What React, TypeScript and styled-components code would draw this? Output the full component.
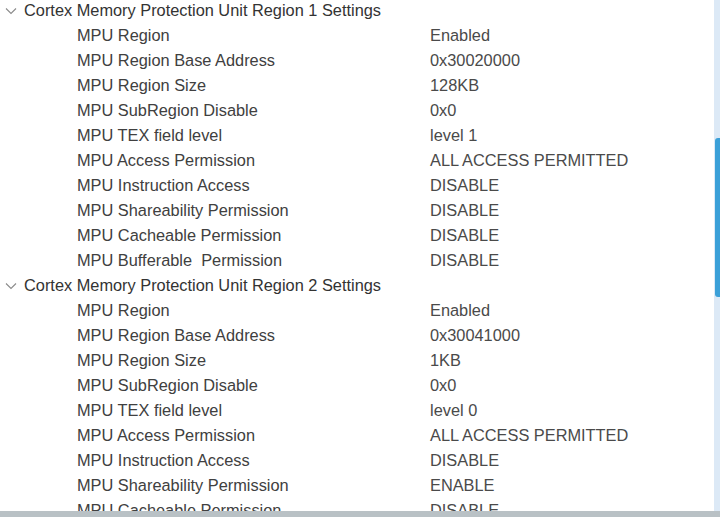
import React from "react";
import styled, { createGlobalStyle } from "styled-components";

const GlobalStyle = createGlobalStyle`
    html, body {
        margin:0;
        padding:0;
        background:#ffffff;
    }
    body {
        font-family:"Liberation Sans", Arial, sans-serif;
    }
`;

type Param = [string, string];

const groups: { title: string; params: Param[] }[] = [
    {
        title: "Cortex Memory Protection Unit Region 1 Settings",
        params: [
            ["MPU Region", "Enabled"],
            ["MPU Region Base Address", "0x30020000"],
            ["MPU Region Size", "128KB"],
            ["MPU SubRegion Disable", "0x0"],
            ["MPU TEX field level", "level 1"],
            ["MPU Access Permission", "ALL ACCESS PERMITTED"],
            ["MPU Instruction Access", "DISABLE"],
            ["MPU Shareability Permission", "DISABLE"],
            ["MPU Cacheable Permission", "DISABLE"],
            ["MPU Bufferable  Permission", "DISABLE"],
        ],
    },
    {
        title: "Cortex Memory Protection Unit Region 2 Settings",
        params: [
            ["MPU Region", "Enabled"],
            ["MPU Region Base Address", "0x30041000"],
            ["MPU Region Size", "1KB"],
            ["MPU SubRegion Disable", "0x0"],
            ["MPU TEX field level", "level 0"],
            ["MPU Access Permission", "ALL ACCESS PERMITTED"],
            ["MPU Instruction Access", "DISABLE"],
            ["MPU Shareability Permission", "ENABLE"],
            ["MPU Cacheable Permission", "DISABLE"],
            ["MPU Bufferable  Permission", "DISABLE"],
        ],
    },
];

const Chevron = () => (
    <svg width="12" height="8" viewBox="0 0 12 8">
        <path d="M1 1.5 L6 6.5 L11 1.5" fill="none" stroke="#8a8a8a" strokeWidth="1.1" />
    </svg>
);

export default function App() {
    return (
        <>
            <GlobalStyle />
            <Page>
                <Main>
                    <Tree>
                        {groups.map((g) => (
                            <Group key={g.title}>
                                <GroupRow>
                                    <Toggle><Chevron /></Toggle>
                                    <Title>{g.title}</Title>
                                </GroupRow>
                                {g.params.map(([label, value], i) => (
                                    <ParamRow key={i}>
                                        <Label>{label}</Label>
                                        <Value>{value}</Value>
                                    </ParamRow>
                                ))}
                            </Group>
                        ))}
                    </Tree>
                    <ScrollTrack>
                        <ScrollThumb />
                    </ScrollTrack>
                </Main>
                <BottomBar />
            </Page>
        </>
    );
}

const Page = styled.div`
    width:720px;
    height:517px;
    display:flex;
    flex-direction:column;
    overflow:hidden;
`;

const Main = styled.div`
    flex:1;
    display:flex;
    min-height:0;
`;

const Tree = styled.div`
    flex:1;
    overflow:hidden;
    margin-top:-2px;
    font-size:16.35px;
    color:#404040;
`;

const Group = styled.div`
    display:flex;
    flex-direction:column;
`;

const GroupRow = styled.div`
    height:25px;
    line-height:25px;
    display:flex;
    align-items:center;
    white-space:pre;
`;

const Toggle = styled.span`
    width:24px;
    display:flex;
    justify-content:flex-start;
    padding-left:5px;
    box-sizing:border-box;
    margin-top:1px;
`;

const Title = styled.span`
    color:#333333;
`;

const ParamRow = styled.div`
    height:25px;
    line-height:25px;
    display:grid;
    grid-template-columns:353px 1fr;
    padding-left:77px;
    white-space:pre;
`;

const Label = styled.span`
    color:#404040;
`;

const Value = styled.span`
    color:#4a4a4a;
`;

const ScrollTrack = styled.div`
    width:6px;
    background:#dce9f6;
    display:flex;
    flex-direction:column;
    padding-top:138px;
    box-sizing:border-box;
`;

const ScrollThumb = styled.div`
    margin-left:1px;
    width:5px;
    height:159px;
    background:#3ba0d8;
    border-radius:3px 0 0 3px;
`;

const BottomBar = styled.div`
    height:6px;
    background:#b9c1c5;
`;
